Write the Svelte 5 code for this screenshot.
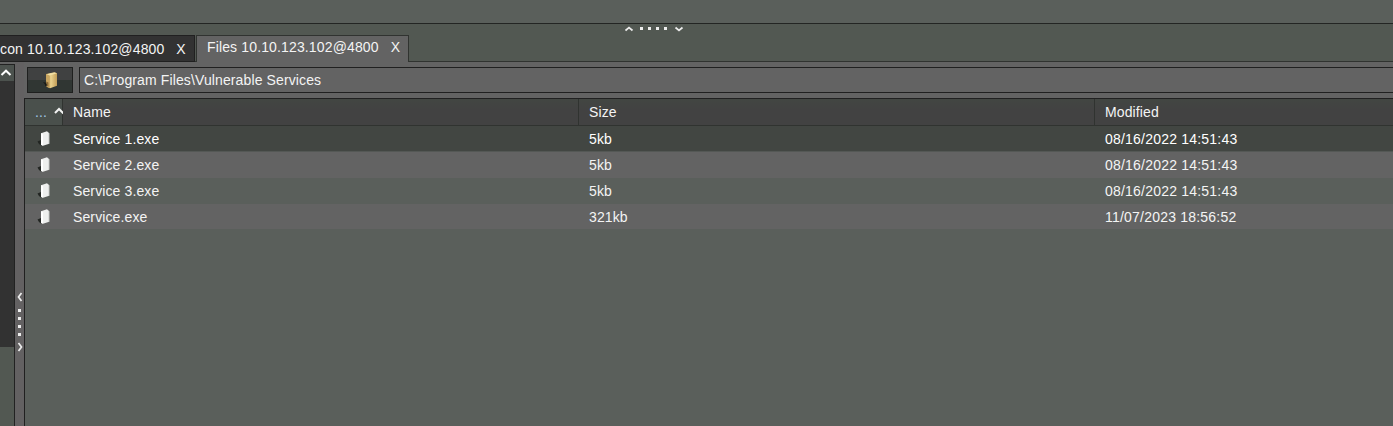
<script>
  const files = [
    { name: 'Service 1.exe', size: '5kb', modified: '08/16/2022 14:51:43' },
    { name: 'Service 2.exe', size: '5kb', modified: '08/16/2022 14:51:43' },
    { name: 'Service 3.exe', size: '5kb', modified: '08/16/2022 14:51:43' },
    { name: 'Service.exe', size: '321kb', modified: '11/07/2023 18:56:52' }
  ];
</script>

<div class="window">
  <div class="upper"></div>
  <div class="split-h">
    <svg width="60" height="7" fill="#eee">
      <g fill="none" stroke="#eee" stroke-width="1.7">
        <path d="M.5 5.5 L4 2.5 L7.5 5.5" />
        <path d="M50.5 2.5 L54 5.5 L57.5 2.5" />
      </g>
      <path d="M15 2h3v3h-3zM23 2h3v3h-3zM31 2h3v3h-3zM39 2h3v3h-3z" />
    </svg>
  </div>
  <div class="tabs">
    <div class="tab back"><span>con 10.10.123.102@4800</span><b>X</b></div>
    <div class="gap"></div>
    <div class="tab front"><span>Files 10.10.123.102@4800</span><b>X</b></div>
    <div class="rest"></div>
  </div>
  <div class="body">
    <div class="side">
      <div class="up"><svg width="14" height="16"><path d="M1.5 10 L6 5.7 L10.5 10" fill="none" stroke="#fff" stroke-width="2" /></svg></div>
      <div class="track"></div>
      <div class="below"></div>
    </div>
    <div class="split-v">
      <svg width="9" height="62" fill="#eee">
        <g fill="none" stroke="#eee" stroke-width="1.7">
          <path d="M6.5 2 L3.5 6 L6.5 10" />
          <path d="M3.5 52 L6.5 56 L3.5 60" />
        </g>
        <path d="M3 18h3v3h-3zM3 26h3v3h-3zM3 34h3v3h-3zM3 42h3v3h-3z" />
      </svg>
    </div>
    <div class="main">
      <div class="toolbar">
        <button aria-label="Up">
          <svg width="16" height="18">
            <defs>
              <linearGradient id="gold" x2="1"><stop stop-color="#b18a48" /><stop offset=".45" stop-color="#ead28d" /><stop offset="1" stop-color="#c19d57" /></linearGradient>
            </defs>
            <path d="M0 11l4 1v4z" fill="#191b19" />
            <path d="M3 3L11.5 1.2 14 2.2V14.8L7 17.3 3 15.5z" fill="url(#gold)" />
            <path d="M3 3L6.8 4.5V17L3 15.5z" fill="#c8a45f" />
            <path d="M3.5 3.2L11.5 1.5 14 2.3 6.8 4.5z" fill="#f2dfa3" />
            <path d="M3.2 10.5l2.2 1v4l-2.2-1z" fill="#876735" />
            <path d="M2.3 12.2l1.4.6v3l-1.4-1z" fill="#171917" />
          </svg>
        </button>
        <div class="path"><span>C:\Program Files\Vulnerable Services</span></div>
      </div>
      <div class="table">
        <div class="row head">
          <div class="c0"><span class="dots">...</span><svg width="9" height="8"><path d="M1 6 L5 2 L9.5 6.5" fill="none" stroke="#f2f2f2" stroke-width="2" /></svg></div>
          <div class="c1 w-name">Name</div>
          <div class="c1 w-size">Size</div>
          <div class="c1 w-mod">Modified</div>
        </div>
        {#each files as f, i}
          <div class="row file" class:selected={i === 0} class:odd={i % 2 === 1}>
            <div class="icon">
              <svg width="14" height="16">
                <path d="M.5 10.5L4 9v5.5L2 13z" fill="#222522" />
                <path d="M4 2.2L10 .3 12.2 2.2V12.8L6 14.8 4 13.8z" fill="#eeefee" />
                <path d="M4 2.2L6 3.2V14.8L4 13.8z" fill="#fff" />
                <path d="M11.5 1.6v11.5l.8-.3V2.2z" fill="#c9cbca" />
              </svg>
            </div>
            <div class="c1 w-name">{f.name}</div>
            <div class="c1 w-size">{f.size}</div>
            <div class="c1 w-mod"><span class="date">{f.modified}</span></div>
          </div>
        {/each}
      </div>
    </div>
  </div>
</div>

<style>
  :global(body) { overflow: hidden; background: #525852; }
  .window, .window * { box-sizing: border-box; }
  .window {
    width: 1393px; height: 426px; display: flex; flex-direction: column; overflow: hidden;
    font: 14px/16px "Liberation Sans", Arial, sans-serif; letter-spacing: .12px;
    color: #f4f4f4; background: #636363; white-space: nowrap;
  }
  svg { display: block; flex: none; }
  .upper { height: 24px; flex: none; background: #5a5f5b; border-bottom: 1px solid #232523; }
  .split-h { height: 11px; flex: none; padding: 1px 0 0 625px; background: #525852; }
  .tabs { height: 27px; flex: none; display: flex; background: #525852; }
  .tab { display: flex; justify-content: space-between; }
  .tab b { font-weight: 400; letter-spacing: 0; }
  .tab span { letter-spacing: .14px; }
  .back { width: 195px; background: #323232; border: 1px solid #202020; border-left: 0; padding: 5px 8.5px 0 0; }
  .gap { width: 1px; background: #525852; border-bottom: 1px solid #303330; }
  .front { width: 213px; background: #636363; border: 1px solid #303330; border-bottom: 0; padding: 3px 8px 0 10px; }
  .rest { flex: 1; border-bottom: 1px solid #303330; }
  .body { flex: 1; display: flex; min-height: 0; }
  .side { width: 15px; flex: none; margin-top: 2px; border-top: 1px solid #222; border-right: 1px solid #222; display: flex; flex-direction: column; }
  .up { height: 16px; background: #4c524e; }
  .track { height: 266px; background: #323232; }
  .below { flex: 1; background: #525852; }
  .split-v { width: 9px; flex: none; padding-top: 229px; background: #636162; }
  .main { flex: 1; min-width: 0; display: flex; flex-direction: column; }
  .toolbar { display: flex; height: 36px; flex: none; padding: 5px 0 5px 3px; gap: 6px; }
  button { display: flex; align-items: flex-start; width: 46px; height: 26px; padding: 3px 0 0 15px; border: 1px solid #1f201f; background: linear-gradient(#404141 0 48%, #303633 52%); }
  .path { flex: 1; border: 1px solid #202020; border-right: 0; padding: 4px 0 0 4px; }
  .table { flex: 1; border-top: 1px solid #202020; border-left: 1px solid #202020; background: #5a5f5b; }
  .row { display: flex; }
  .head { height: 27px; border-bottom: 1px solid #303330; background: linear-gradient(#424642, #424242 40%, #424242); }
  .c0 { width: 38px; background: #4a504c; border-right: 1px solid #303330; display: flex; padding: 5px 0 0 10px; }
  .c0 svg { margin: 3px -1px 0 7px; }
  .dots { width: 12px; color: #9fc5e4; }
  .c1 { padding-left: 10px; flex: none; }
  .w-name, .w-size { width: 516px; }
  .w-mod { width: 298px; }
  .date { letter-spacing: .21px; }
  .head .w-name, .head .w-size { border-right: 1px solid #303330; }
  .head .c1 { padding-top: 5px; }
  .file { height: 26px; padding-top: 5px; }
  .selected { background: #424642; border-bottom: 1px solid #545855; color: #fff; }
  .odd { background: #636363; }
  .file:last-child { height: 25px; }
  .icon { width: 38px; flex: none; padding-left: 12px; }
</style>
